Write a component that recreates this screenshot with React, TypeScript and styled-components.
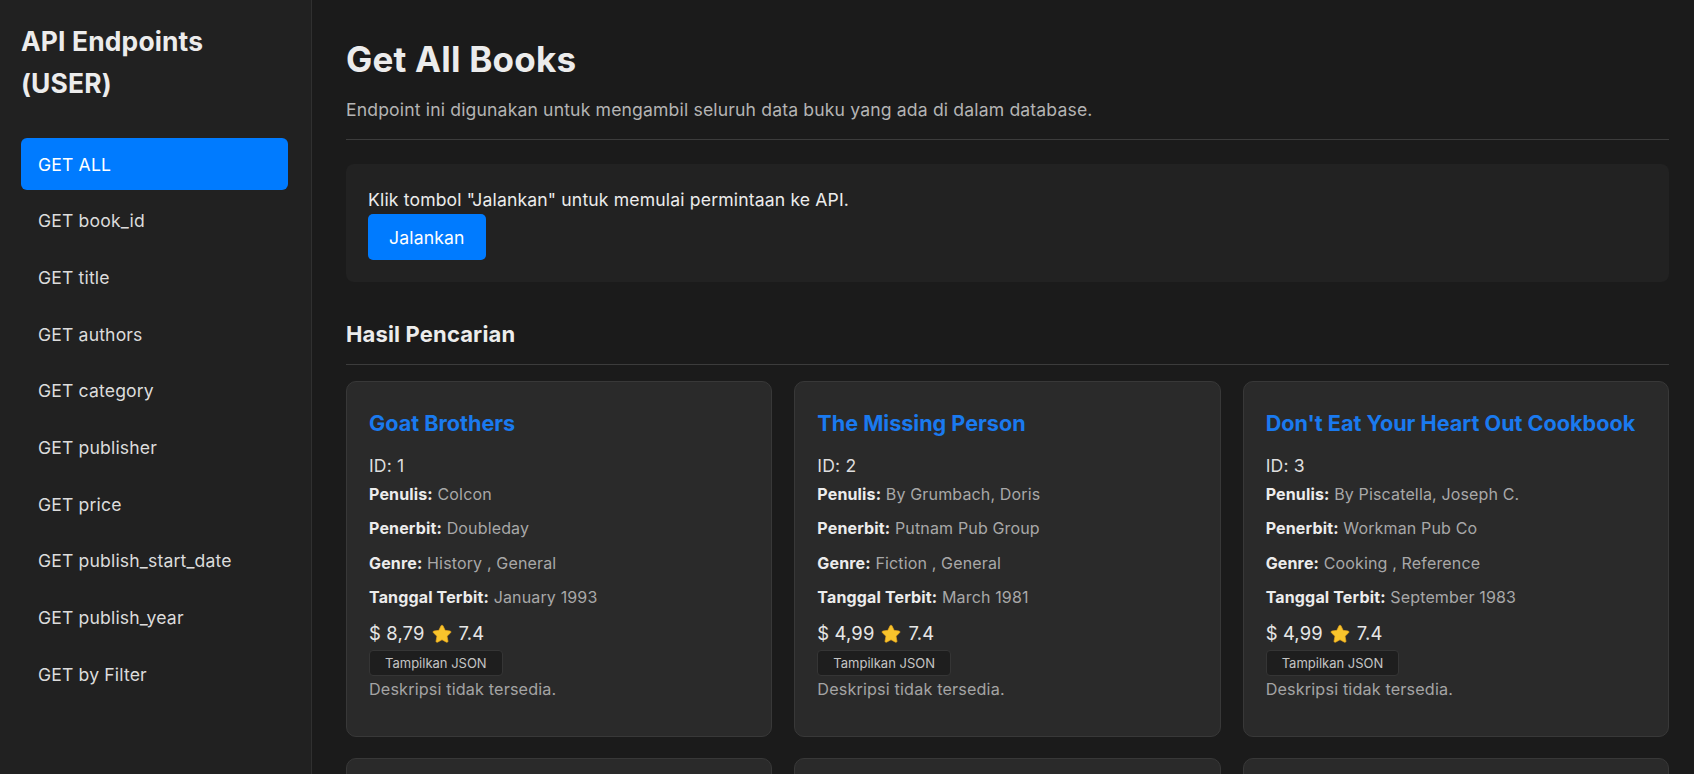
import React, { useState } from 'react';
import styled, { createGlobalStyle } from 'styled-components';

const GlobalStyle = createGlobalStyle`
  * {
    box-sizing: border-box;
  }
  body {
    margin: 0;
    background: #1b1b1b;
    color: #e4e4e4;
    font-family: Inter, 'Noto Sans', 'Liberation Sans', sans-serif;
    font-size: 17.6px;
    letter-spacing: 0.15px;
    line-height: 1.6;
  }
`;

const Layout = styled.div`
  display: flex;
  min-height: 100vh;
`;

const Sidebar = styled.aside`
  width: 312px;
  flex-shrink: 0;
  background: #212121;
  border-right: 1px solid #303030;
  padding: 21px 23px 21px 21px;
`;

const SidebarTitle = styled.h2`
  margin: 0 0 34px;
  font-size: 26.4px;
  line-height: 41.5px;
  font-weight: 700;
  color: #ececec;
`;

const NavList = styled.nav`
  display: flex;
  flex-direction: column;
  gap: 4.7px;
`;

const NavButton = styled.button<{ $active?: boolean }>`
  display: block;
  width: 100%;
  height: 52px;
  padding: 0 17px;
  border: none;
  border-radius: 6px;
  text-align: left;
  font-family: inherit;
  font-size: 17.6px;
  letter-spacing: 0.15px;
  color: ${p => (p.$active ? '#ffffff' : '#dcdcdc')};
  background: ${p => (p.$active ? '#007bff' : 'transparent')};
  cursor: pointer;
`;

const Main = styled.main`
  flex: 1;
  min-width: 0;
  padding: 38px 25px 40px 34px;
`;

const PageTitle = styled.h1`
  margin: 0 0 16px;
  font-size: 35px;
  line-height: 1.2;
  font-weight: 700;
  letter-spacing: 0.2px;
  color: #ececec;
`;

const Subtitle = styled.p`
  margin: 0;
  color: #b4b4b4;
`;

const Divider = styled.div<{ $top: number; $bottom: number }>`
  height: 1px;
  background: #3c3c3c;
  margin: ${p => p.$top}px 0 ${p => p.$bottom}px;
`;

const RunBox = styled.div`
  background: #222222;
  border-radius: 8px;
  padding: 22px;
`;

const RunText = styled.p`
  margin: 0;
  color: #ececec;
`;

const RunButton = styled.button`
  height: 46px;
  padding: 0 21px;
  border: none;
  border-radius: 5px;
  background: #007bff;
  color: #ffffff;
  font-family: inherit;
  font-size: 17.6px;
  letter-spacing: 0.15px;
  cursor: pointer;
`;

const SectionTitle = styled.h3`
  margin: 39px 0 0;
  font-size: 22px;
  line-height: 1.2;
  font-weight: 700;
  color: #ececec;
`;

const CardGrid = styled.div`
  display: grid;
  grid-template-columns: repeat(3, minmax(0, 1fr));
  gap: 21px 22px;
`;

const Card = styled.article`
  background: #2a2a2a;
  border: 1px solid #383838;
  border-radius: 10px;
  padding: 28px 22px 22px;
`;

const BookTitle = styled.h4`
  margin: 0 0 16px;
  font-size: 21.6px;
  line-height: 26px;
  font-weight: 700;
  letter-spacing: 0;
  color: #1a7aef;
  white-space: nowrap;
  overflow: hidden;
  text-overflow: ellipsis;
`;

const BookId = styled.div`
  margin-bottom: 2px;
  color: #dedede;
`;

const Field = styled.p`
  margin: 0 0 8.8px;
  font-size: 16px;
  color: #a8a8a8;

  strong {
    color: #ececec;
    font-weight: 700;
  }
`;

const PriceRow = styled.div`
  display: flex;
  align-items: center;
  gap: 6px;
  margin-top: 2px;
  font-size: 18.4px;
  line-height: 29px;
  color: #e6e6e6;
`;

const JsonButton = styled.button`
  display: block;
  height: 26px;
  margin-top: 2px;
  padding: 0 15px;
  border: 1px solid #353535;
  border-radius: 4px;
  background: #1e1e1e;
  color: #c4c4c4;
  font-family: inherit;
  font-size: 13px;
  cursor: pointer;
`;

const Description = styled.p`
  margin: 1px 0 10.8px;
  font-size: 16.2px;
  color: #a4a4a4;
`;

const Star = () => (
  <svg width="22" height="22" viewBox="0 0 24 24">
    <path
      d="M12 2.4c.5 0 .9.3 1.1.7l2.3 4.9 5.3.7c1 .1 1.4 1.3.7 2l-3.9 3.7 1 5.3c.2 1-.9 1.7-1.7 1.2L12 18.3l-4.8 2.6c-.8.5-1.900-.2-1.700-1.2l1-5.300-3.900-3.700c-.7-.7-.3-1.900.7-2l5.300-.7 2.300-4.900c.2-.4.6-.7 1.100-.7z"
      fill="#f8c42c"
      stroke="#eaa61a"
      strokeWidth="0.7"
      strokeLinejoin="round"
    />
  </svg>
);

const ENDPOINTS = [
  'GET ALL',
  'GET book_id',
  'GET title',
  'GET authors',
  'GET category',
  'GET publisher',
  'GET price',
  'GET publish_start_date',
  'GET publish_year',
  'GET by Filter',
];

type Book = {
  id: number;
  title: string;
  authors: string;
  publisher: string;
  genre: string;
  date: string;
  price: string;
  rating: string;
};

const BOOKS: Book[] = [
  { id: 1, title: 'Goat Brothers', authors: 'Colcon', publisher: 'Doubleday', genre: 'History , General', date: 'January 1993', price: '8,79', rating: '7.4' },
  { id: 2, title: 'The Missing Person', authors: 'By Grumbach, Doris', publisher: 'Putnam Pub Group', genre: 'Fiction , General', date: 'March 1981', price: '4,99', rating: '7.4' },
  { id: 3, title: "Don't Eat Your Heart Out Cookbook", authors: 'By Piscatella, Joseph C.', publisher: 'Workman Pub Co', genre: 'Cooking , Reference', date: 'September 1983', price: '4,99', rating: '7.4' },
  { id: 4, title: 'When Your Corporate Umbrella Leaks', authors: 'By Davis, Paul D.', publisher: 'Natl Pr Books', genre: 'Business & Economics', date: 'April 1991', price: '4,99', rating: '7.4' },
  { id: 5, title: 'Breastfeeding Basics', authors: 'By Spangler, Amy', publisher: 'Amy Spangler', genre: 'Family & Relationships', date: 'February 1997', price: '5,32', rating: '7.4' },
  { id: 6, title: 'The Foundation of Leadership', authors: 'By Short, Myron J.', publisher: 'Excalibur Pub', genre: 'Religion', date: 'February 1997', price: '5,29', rating: '7.4' },
];

const BookCard = ({ book }: { book: Book }) => (
  <Card>
    <BookTitle>{book.title}</BookTitle>
    <BookId>ID: {book.id}</BookId>
    <Field>
      <strong>Penulis:</strong> {book.authors}
    </Field>
    <Field>
      <strong>Penerbit:</strong> {book.publisher}
    </Field>
    <Field>
      <strong>Genre:</strong> {book.genre}
    </Field>
    <Field>
      <strong>Tanggal Terbit:</strong> {book.date}
    </Field>
    <PriceRow>
      <span>$ {book.price}</span>
      <Star />
      <span>{book.rating}</span>
    </PriceRow>
    <JsonButton>Tampilkan JSON</JsonButton>
    <Description>Deskripsi tidak tersedia.</Description>
  </Card>
);

export default function App() {
  const [active, setActive] = useState(0);

  return (
    <>
      <GlobalStyle />
      <Layout>
        <Sidebar>
          <SidebarTitle>
            API Endpoints
            <br />
            (USER)
          </SidebarTitle>
          <NavList>
            {ENDPOINTS.map((name, i) => (
              <NavButton key={name} $active={active === i} onClick={() => setActive(i)}>
                {name}
              </NavButton>
            ))}
          </NavList>
        </Sidebar>
        <Main>
          <PageTitle>Get All Books</PageTitle>
          <Subtitle>Endpoint ini digunakan untuk mengambil seluruh data buku yang ada di dalam database.</Subtitle>
          <Divider $top={15} $bottom={24} />
          <RunBox>
            <RunText>Klik tombol "Jalankan" untuk memulai permintaan ke API.</RunText>
            <RunButton>Jalankan</RunButton>
          </RunBox>
          <SectionTitle>Hasil Pencarian</SectionTitle>
          <Divider $top={16} $bottom={16} />
          <CardGrid>
            {BOOKS.map(book => (
              <BookCard key={book.id} book={book} />
            ))}
          </CardGrid>
        </Main>
      </Layout>
    </>
  );
}
